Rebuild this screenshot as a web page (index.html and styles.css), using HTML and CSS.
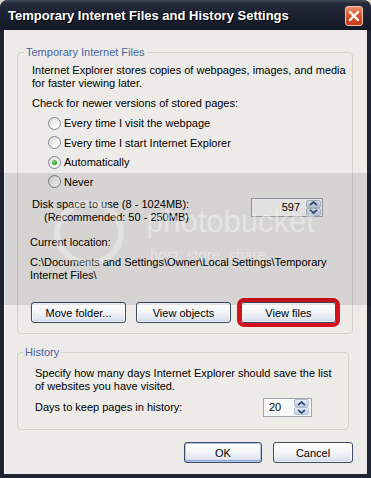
FILE: index.html
```html
<!DOCTYPE html>
<html>
<head>
<meta charset="utf-8">
<link rel="stylesheet" href="styles.css">
</head>
<body>
<div class="window">
  <div class="titlebar">
    <span class="title">Temporary Internet Files and History Settings</span>
    <span class="close"><svg width="12" height="12" viewBox="0 0 12 12"><path d="M2 2 L10 10 M10 2 L2 10" stroke="#fff" stroke-width="2.4" stroke-linecap="round"/></svg></span>
  </div>
  <div class="client">
    <fieldset class="group group-tif">
      <legend>Temporary Internet Files</legend>
      <p class="intro">Internet Explorer stores copies of webpages, images, and media<br>for faster viewing later.</p>
      <p class="check">Check for newer versions of stored pages:</p>
      <ul class="radios">
        <li><span class="radio"></span>Every time I visit the webpage</li>
        <li><span class="radio"></span>Every time I start Internet Explorer</li>
        <li><span class="radio checked"></span>Automatically</li>
        <li><span class="radio"></span>Never</li>
      </ul>
      <div class="disk-row">
        <div class="disk-label">
          <p>Disk space to use (8 - 1024MB):</p>
          <p class="rec">(Recommended: 50 - 250MB)</p>
        </div>
        <div class="spin spin-disk">
          <span class="spin-value">597</span>
          <span class="spin-btns">
            <span class="spin-btn"><svg width="9" height="5" viewBox="0 0 9 5"><path d="M1 4.2 L4.5 1 L8 4.2" fill="none" stroke="#3b4e72" stroke-width="1.8"/></svg></span>
            <span class="spin-btn"><svg width="9" height="5" viewBox="0 0 9 5"><path d="M1 0.8 L4.5 4 L8 0.8" fill="none" stroke="#3b4e72" stroke-width="1.8"/></svg></span>
          </span>
        </div>
      </div>
      <p class="loc-label">Current location:</p>
      <p class="loc-path">C:\Documents and Settings\Owner\Local Settings\Temporary<br>Internet Files\</p>
      <div class="btn-row">
        <button class="btn btn-group">Move folder...</button>
        <button class="btn btn-group">View objects</button>
        <button class="btn btn-group btn-marked">View files</button>
      </div>
    </fieldset>
    <fieldset class="group group-history">
      <legend>History</legend>
      <p class="hist-intro">Specify how many days Internet Explorer should save the list<br>of websites you have visited.</p>
      <div class="days-row">
        <p>Days to keep pages in history:</p>
        <div class="spin spin-days">
          <span class="spin-value">20</span>
          <span class="spin-btns">
            <span class="spin-btn"><svg width="9" height="5" viewBox="0 0 9 5"><path d="M1 4.2 L4.5 1 L8 4.2" fill="none" stroke="#3b4e72" stroke-width="1.8"/></svg></span>
            <span class="spin-btn"><svg width="9" height="5" viewBox="0 0 9 5"><path d="M1 0.8 L4.5 4 L8 0.8" fill="none" stroke="#3b4e72" stroke-width="1.8"/></svg></span>
          </span>
        </div>
      </div>
    </fieldset>
    <div class="dialog-buttons">
      <button class="btn btn-ok">OK</button>
      <button class="btn btn-cancel">Cancel</button>
    </div>
  </div>
  <div class="watermark">
    <svg width="371" height="132" viewBox="0 0 371 132">
      <ellipse cx="89" cy="60" rx="32" ry="30" fill="none" stroke="rgba(255,255,255,0.3)" stroke-width="6"/>
      <text x="146" y="59" class="wm-big">photobucket</text>
      <text x="150" y="87" class="wm-small">host. store. share.</text>
    </svg>
  </div>
</div>
</body>
</html>
```
FILE: styles.css
```css
html, body {
  margin: 0;
  padding: 0;
}
body {
  background: #d9d4c0;
  font-family: "Liberation Sans", Arial, sans-serif;
  font-size: 11px;
  color: #000;
}
.window {
  position: relative;
  width: 371px;
  height: 478px;
  display: flex;
  flex-direction: column;
  background: #1f2432;
  border-radius: 8px 8px 0 0;
  overflow: hidden;
}
.titlebar {
  height: 30px;
  flex: none;
  display: flex;
  align-items: center;
  justify-content: space-between;
  padding: 2px 8px 0 8px;
  box-sizing: border-box;
  background: linear-gradient(#454c5e 0, #252b3b 3px, #1a1f2d 60%, #141926 100%);
}
.title {
  color: #fff;
  font-weight: bold;
  font-size: 13px;
  text-shadow: 1px 1px 0 #000;
  line-height: 16px;
  white-space: nowrap;
}
.close {
  width: 18px;
  height: 20px;
  box-sizing: border-box;
  border: 1px solid #f2c3b4;
  border-radius: 3px;
  background: linear-gradient(#ee9068, #d9502c 50%, #c53c1a);
  display: flex;
  align-items: center;
  justify-content: center;
}
.client {
  flex: 1;
  margin: 0 4px 4px 4px;
  background: #ecebe8;
  padding: 16px 14px 0 13px;
  display: flex;
  flex-direction: column;
  align-items: flex-start;
  box-shadow: inset 1px 0 0 #fff;
}
p {
  margin: 0;
  line-height: 13px;
  white-space: nowrap;
}
.group {
  margin: 0;
  border: 1px solid #d3d1c9;
  border-radius: 4px;
  box-sizing: border-box;
  min-inline-size: 0;
}
.group legend {
  color: #4a63a0;
  padding: 0 2px;
  line-height: 13px;
}
.group-tif {
  width: 336px;
  padding: 0 16px 10px 14px;
}
.group-tif legend {
  margin-left: -8px;
}
.intro {
  margin-top: 4.5px;
}
.check {
  margin-top: 7px;
}
.radios {
  list-style: none;
  margin: 4px 0 0;
  padding: 0 0 0 16px;
}
.radios li {
  height: 19.5px;
  display: flex;
  align-items: center;
  white-space: nowrap;
}
.radio {
  width: 13px;
  height: 13px;
  flex: none;
  box-sizing: border-box;
  border-radius: 50%;
  border: 1px solid #7d8895;
  background: linear-gradient(135deg, #d8d8d2, #f6f6f4 60%, #fff);
  margin-right: 3px;
  display: flex;
  align-items: center;
  justify-content: center;
}
.radio.checked::after {
  content: "";
  width: 5px;
  height: 5px;
  border-radius: 50%;
  background: radial-gradient(circle at 35% 35%, #7fdc7f, #21a121 70%);
}
.disk-row {
  display: flex;
  justify-content: space-between;
  align-items: flex-start;
  margin-top: 6px;
}
.rec {
  padding-left: 12px;
}
.spin {
  display: flex;
  align-items: center;
  box-sizing: border-box;
  border: 1px solid #a2a6ad;
  background: #fafafa;
  flex: none;
}
.spin-disk {
  width: 72px;
  height: 19px;
  margin-right: 13px;
  margin-top: 0.5px;
  justify-content: flex-end;
  padding-right: 1px;
}
.spin-disk .spin-value {
  margin-right: 6px;
}
.spin-days {
  width: 49px;
  height: 19px;
  margin-right: 19px;
  justify-content: space-between;
  padding: 0 2px 0 5px;
}
.spin-value {
  font-size: 11px;
  line-height: 13px;
}
.spin-btns {
  display: flex;
  flex-direction: column;
}
.spin-btn {
  width: 15px;
  height: 8px;
  box-sizing: border-box;
  border: 1px solid #b4bfd3;
  border-radius: 2px;
  background: linear-gradient(#e6ecf7, #c5d1e8);
  display: flex;
  align-items: center;
  justify-content: center;
}
.loc-label {
  margin-top: 12px;
  margin-left: -2px;
}
.loc-path {
  margin-top: 7px;
  margin-left: -2px;
}
.btn-row {
  display: flex;
  gap: 10px;
  margin-top: 20.5px;
  margin-left: -1px;
}
.btn {
  font-family: "Liberation Sans", Arial, sans-serif;
  font-size: 11px;
  color: #000;
  height: 21px;
  padding: 0;
  border: 1px solid #3e4b62;
  border-radius: 3px;
  background: linear-gradient(#ffffff, #f4f5f7 45%, #dfe5ef 85%, #c4cfe2);
  box-shadow: inset 0 0 0 1px rgba(255,255,255,0.6);
  flex: none;
}
.btn-group {
  width: 95px;
}
.btn-marked {
  outline: 4px solid #d8121c;
  outline-offset: 0;
}
.group-history {
  width: 332px;
  margin-top: 12px;
  padding: 0 17px 12px 17px;
}
.group-history legend {
  margin-left: -12px;
}
.hist-intro {
  margin-top: 7.5px;
}
.days-row {
  display: flex;
  justify-content: space-between;
  align-items: center;
  margin-top: 5px;
  height: 19px;
}
.dialog-buttons {
  align-self: stretch;
  display: flex;
  justify-content: flex-end;
  gap: 11px;
  margin-top: 12.5px;
}
.btn-ok {
  width: 78px;
  box-shadow: inset 0 0 0 1px #b3c6ea, inset 0 -1px 0 1px #8aa5d8;
}
.btn-cancel {
  width: 80px;
}
.watermark {
  position: absolute;
  left: 0;
  top: 173px;
  width: 371px;
  height: 132px;
  background: rgba(0, 0, 0, 0.095);
  pointer-events: none;
}
.watermark svg {
  display: block;
}
.wm-big {
  font-family: "Liberation Sans", Arial, sans-serif;
  font-size: 31px;
  fill: rgba(255, 255, 255, 0.4);
}
.wm-small {
  font-family: "Liberation Sans", Arial, sans-serif;
  font-size: 15px;
  fill: rgba(255, 255, 255, 0.35);
}
```
